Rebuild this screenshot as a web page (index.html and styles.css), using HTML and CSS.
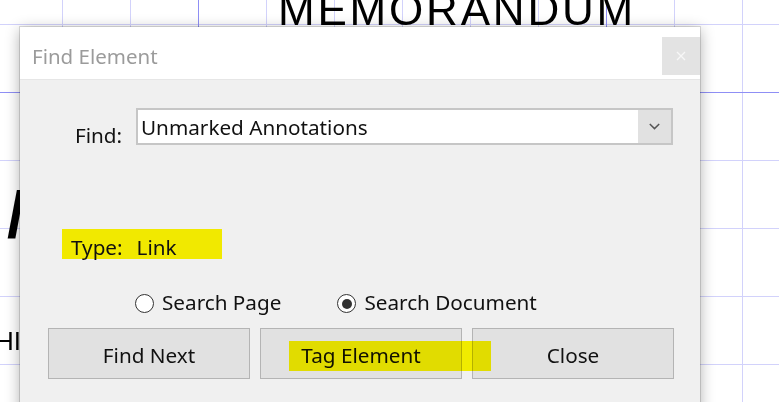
FILE: index.html
```html
<!DOCTYPE html>
<html lang="en">
<head>
<meta charset="utf-8">
<title>Find Element</title>
<link rel="stylesheet" href="styles.css">
</head>
<body>
  <div class="doc">
    <h1 class="memo-title">MEMORANDUM</h1>
    <div class="big-letter">/</div>
    <div class="hi-line">HI</div>
  </div>

  <div class="dialog" role="dialog" aria-label="Find Element">
    <div class="titlebar">
      <span class="title">Find Element</span>
      <button class="close-x" aria-label="Close">
        <svg width="10" height="10" viewBox="0 0 10 10"><path d="M1 1L9 9M9 1L1 9" stroke="#f7f7f7" stroke-width="1.4" fill="none"/></svg>
      </button>
    </div>

    <div class="dialog-body">
      <div class="find-row">
        <label class="find-label">Find:</label>
        <div class="combo">
          <span class="combo-value">Unmarked Annotations</span>
          <span class="combo-arrow">
            <svg width="11" height="7" viewBox="0 0 11 7"><path d="M0.8 1L5.5 5.6L10.2 1" stroke="#555" stroke-width="1.5" fill="none"/></svg>
          </span>
        </div>
      </div>

      <div class="type-row">
        <span class="type-mark"><span>Type:</span><span class="type-value">Link</span></span>
      </div>

      <div class="radio-row">
        <label class="radio"><span class="radio-dot"></span>Search Page</label>
        <label class="radio checked"><span class="radio-dot"></span>Search Document</label>
      </div>

      <div class="buttons">
        <button class="btn">Find Next</button>
        <button class="btn">Tag Element</button>
        <button class="btn">Close</button>
      </div>

      <span class="marker tag-mark"></span>
    </div>
  </div>
</body>
</html>
```

FILE: styles.css
```css
html {
  background-color: #fff;
  background-image:
    linear-gradient(to right, #8f8ff5 1px, transparent 1px),
    linear-gradient(to bottom, #8f8ff5 1px, transparent 1px),
    linear-gradient(to right, #d2d2fb 1px, transparent 1px),
    linear-gradient(to bottom, #d2d2fb 1px, transparent 1px);
  background-size: 408px 408px, 408px 408px, 68px 68px, 68px 68px;
  background-position: 198px 0, 0 92px, 62px 0, 0 24px;
}

body {
  margin: 0;
  height: 402px;
  overflow: hidden;
  font-family: "Noto Sans", "Open Sans", sans-serif;
  color: #111;
}

/* underlying document page */
.doc {
  display: flow-root;
}

.memo-title {
  margin: -12px 0 0 278px;
  font-family: "Liberation Sans", Arial, sans-serif;
  font-weight: normal;
  font-size: 44px;
  line-height: 44px;
  letter-spacing: 2.8px;
  color: #000;
}

.big-letter {
  margin: 150px 0 0 7px;
  font-family: "Liberation Sans", Arial, sans-serif;
  font-weight: bold;
  font-size: 65px;
  line-height: 65px;
  height: 65px;
  color: #000;
}

.hi-line {
  margin: 81px 0 0 -5px;
  font-family: "Liberation Sans", Arial, sans-serif;
  font-size: 26px;
  line-height: 26px;
  color: #000;
}

/* dialog window */
.dialog {
  position: absolute;
  left: 20px;
  top: 27px;
  width: 680px;
  height: 400px;
  background: #f0f0f0;
  box-shadow: 0 0 0 1px rgba(0, 0, 0, 0.13), 0 3px 14px rgba(0, 0, 0, 0.32);
}

.titlebar {
  height: 53px;
  box-sizing: border-box;
  padding: 6px 0 0 12px;
  background: #fff;
  border-bottom: 1px solid #e6e6e6;
  display: flex;
  align-items: center;
  justify-content: space-between;
}

.title {
  font-size: 20.5px;
  line-height: 28px;
  color: #9b9b9b;
}

.close-x {
  width: 38px;
  height: 38px;
  margin: 0;
  padding: 0;
  border: 0;
  background: #e3e3e3;
  display: flex;
  align-items: center;
  justify-content: center;
}

.dialog-body {
  position: relative;
  display: flow-root;
  font-size: 20.7px;
}

.find-row {
  display: flex;
  align-items: flex-start;
  margin: 28px 0 0 55px;
}

.find-label {
  width: 61px;
  margin-top: 14px;
  line-height: 27px;
}

.combo {
  width: 537px;
  height: 37px;
  box-sizing: border-box;
  border: 2px solid #c6c6c6;
  display: flex;
}

.combo-value {
  flex: 1;
  background: #fff;
  padding: 1px 0 0 3px;
  line-height: 32px;
}

.combo-arrow {
  width: 33px;
  background: #e1e1e1;
  display: flex;
  align-items: center;
  justify-content: center;
}

.type-row {
  margin: 80px 0 0 42px;
}

.type-mark {
  display: flex;
  width: 160px;
  height: 30px;
  box-sizing: border-box;
  padding: 5px 0 0 9px;
  line-height: 27px;
  background: #f1e900;
}

.type-value {
  margin-left: 14px;
}

.radio-row {
  display: flex;
  gap: 56px;
  margin: 30px 0 0 115px;
  line-height: 27px;
}

.radio {
  display: flex;
  align-items: center;
  gap: 8px;
}

.radio-dot {
  width: 19px;
  height: 19px;
  box-sizing: border-box;
  border: 1.5px solid #333;
  border-radius: 50%;
  background: #fff;
  margin-top: 2px;
  display: flex;
  align-items: center;
  justify-content: center;
}

.radio.checked .radio-dot::after {
  content: "";
  width: 10px;
  height: 10px;
  border-radius: 50%;
  background: #333;
}

.buttons {
  display: flex;
  gap: 10px;
  margin: 12px 0 0 28px;
}

.btn {
  width: 202px;
  height: 51px;
  box-sizing: border-box;
  padding: 3px 0 0;
  border: 1px solid #b4b4b4;
  background: #e1e1e1;
  font-family: inherit;
  font-size: 20.7px;
  line-height: 27px;
  color: #111;
}

/* yellow highlighter stroke over the buttons */
.marker {
  position: absolute;
  mix-blend-mode: multiply;
  background: #fffa00;
}

.tag-mark {
  left: 269px;
  top: 261px;
  width: 202px;
  height: 30px;
}
```
